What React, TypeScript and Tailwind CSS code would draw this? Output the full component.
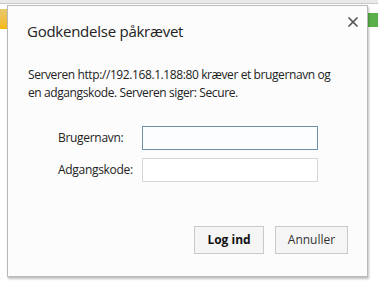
import { X } from 'lucide-react'

export default function App() {
  return (
    <div className="relative h-[285px] w-[378px] overflow-hidden bg-white font-['Open_Sans',sans-serif]">
      {/* Browser chrome behind the dialog */}
      <div className="h-[4px] border-b border-[#c8c8c8] bg-[#e9e9e9]" />
      <div className="flex justify-between pt-[5px]">
        <div className="h-[20px] w-[8px] bg-gradient-to-b from-[#e8c86a] to-[#f5b800]" />
        <div className="mt-[4px] h-[14px] w-[12px] bg-[#5ab04a]" />
      </div>

      {/* Auth dialog */}
      <div className="absolute left-[7px] top-[5px] flex h-[272px] w-[361px] flex-col border border-[#b9b9b9] bg-[#fcfcfc] shadow-[1px_2px_2px_rgba(0,0,0,0.25)]">
        <div className="flex items-start justify-between pl-[19px] pr-[6px] pt-[14px]">
          <h1 className="text-[15px] leading-[22px] tracking-[-0.25px] text-[#222]">Godkendelse påkrævet</h1>
          <button className="mt-[-6px] text-[#555]">
            <X size={16} strokeWidth={2.6} />
          </button>
        </div>

        <p className="mt-[24px] pl-[20px] pr-[4px] text-[12px] leading-[18px] tracking-[-0.4px] text-[#222]">
          Serveren http://192.168.1.188:80 kræver et brugernavn og
          <br />
          en adgangskode. Serveren siger: Secure.
        </p>

        <div className="mt-[24px] grid grid-cols-[84px_176px] items-center gap-y-[8px] pl-[50px] text-[12px] tracking-[-0.3px] text-[#222]">
          <label>Brugernavn:</label>
          <input className="h-[24px] border border-[#6f8ea9] bg-[#fbfdff] outline-none" />
          <label>Adgangskode:</label>
          <input className="h-[24px] border border-[#d6d6d6] bg-white outline-none" />
        </div>

        <div className="mt-auto flex justify-end gap-[11px] pb-[22px] pr-[19px]">
          <button className="h-[28px] w-[70px] border border-[#c9c9c9] bg-[#f5f5f5] text-[12px] font-bold text-[#111]">
            Log ind
          </button>
          <button className="h-[28px] w-[73px] border border-[#c9c9c9] bg-[#f5f5f5] text-[12px] text-[#333]">
            Annuller
          </button>
        </div>
      </div>
    </div>
  )
}
